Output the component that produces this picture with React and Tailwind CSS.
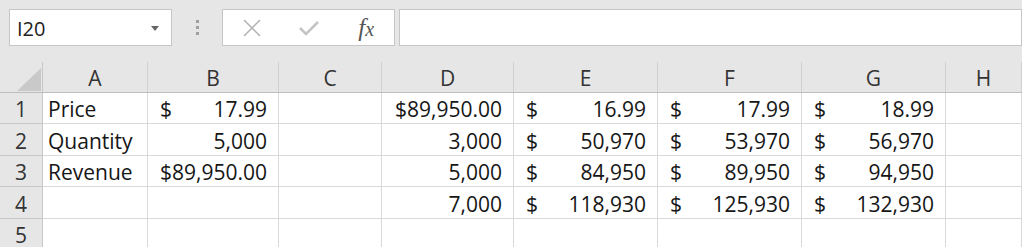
const cols = ['A', 'B', 'C', 'D', 'E', 'F', 'G', 'H'];

// each cell: text | { acct: value } | { right: value }
const rows = [
  { h: 'h-[31px]', cells: ['Price', { acct: '17.99' }, null, { right: '$89,950.00' }, { acct: '16.99' }, { acct: '17.99' }, { acct: '18.99' }, null] },
  { h: 'h-[32px]', cells: ['Quantity', { right: '5,000' }, null, { right: '3,000' }, { acct: '50,970' }, { acct: '53,970' }, { acct: '56,970' }, null] },
  { h: 'h-[31px]', cells: ['Revenue', { right: '$89,950.00' }, null, { right: '5,000' }, { acct: '84,950' }, { acct: '89,950' }, { acct: '94,950' }, null] },
  { h: 'h-[32px]', cells: [null, null, null, { right: '7,000' }, { acct: '118,930' }, { acct: '125,930' }, { acct: '132,930' }, null] },
  { h: 'h-[31px]', cells: [null, null, null, null, null, null, null, null] },
];

const gridCols = 'grid grid-cols-[43px_105px_131px_103px_132px_144px_144px_144px_1fr]';

function Cell({ value }) {
  if (value == null) return <div className="border-r border-b border-[#d9d9d9] bg-white" />;
  if (typeof value === 'string') {
    return (
      <div className="flex items-center pt-[3px] pl-[5px] border-r border-b border-[#d9d9d9] bg-white whitespace-nowrap">
        {value}
      </div>
    );
  }
  if (value.acct) {
    return (
      <div className="flex items-center justify-between pt-[3px] pl-[12px] pr-[11px] border-r border-b border-[#d9d9d9] bg-white whitespace-nowrap">
        <span>$</span>
        <span>{value.acct}</span>
      </div>
    );
  }
  return (
    <div className="flex items-center justify-end pt-[3px] pr-[11px] border-r border-b border-[#d9d9d9] bg-white whitespace-nowrap">
      {value.right}
    </div>
  );
}

export default function App() {
  return (
    <div className="w-[1022px] h-[247px] overflow-hidden bg-[#e6e6e6] font-['Open_Sans',sans-serif] text-[21px] leading-none text-[#161616]">
      {/* formula bar */}
      <div className="flex items-start h-[62px] pt-[9px]">
        <div className="ml-[9px] w-[163px] h-[37px] bg-white border border-[#c6c6c6] flex items-center justify-between pt-[2px] pl-[7px] pr-[12px]">
          <span className="text-[20px] text-[#222]">I20</span>
          <svg width="8" height="5" viewBox="0 0 8 5"><path d="M0 0 L8 0 L4 5 Z" fill="#666" /></svg>
        </div>
        <div className="w-[50px] h-[37px] flex flex-col items-center justify-center gap-[3px]">
          <span className="w-[3px] h-[3px] bg-[#a0a0a0]" />
          <span className="w-[3px] h-[3px] bg-[#a0a0a0]" />
          <span className="w-[3px] h-[3px] bg-[#a0a0a0]" />
        </div>
        <div className="w-[173px] h-[37px] bg-white border border-[#c6c6c6] flex items-center">
          <div className="w-[58px] flex justify-center">
            <svg width="18" height="18" viewBox="0 0 18 18"><path d="M1 1 L17 17 M17 1 L1 17" stroke="#b4b4b4" strokeWidth="1.6" fill="none" /></svg>
          </div>
          <div className="w-[58px] flex justify-center">
            <svg width="22" height="18" viewBox="0 0 22 18"><path d="M2 9 L8 15 L20 3" stroke="#c4c4c4" strokeWidth="2.6" fill="none" /></svg>
          </div>
          <div className="w-[56px] flex justify-center">
            <span className="font-['Liberation_Serif',serif] italic text-[25px] text-[#555] leading-none">
              f<span className="text-[20px]">x</span>
            </span>
          </div>
        </div>
        <div className="ml-[4px] flex-1 h-[37px] bg-white border border-[#c6c6c6]" />
      </div>

      {/* sheet */}
      <div>
        <div className={`${gridCols} h-[31px] border-b border-[#bdbdbd] text-[#333]`}>
          <div className="relative border-r border-[#c8c8c8]">
            <svg className="absolute left-[17px] top-[6px]" width="24" height="23" viewBox="0 0 24 23"><path d="M24 0 L24 23 L0 23 Z" fill="#c9c9c9" /></svg>
          </div>
          {cols.map((c) => (
            <div key={c} className="flex items-center justify-center pt-[3px] border-r border-[#d0d0d0]">
              {c}
            </div>
          ))}
        </div>
        {rows.map((r, i) => (
          <div key={i} className={`${gridCols} ${r.h}`}>
            <div className="flex items-center justify-center pt-[3px] border-r border-b border-[#c8c8c8] bg-[#e6e6e6] text-[#333]">
              {i + 1}
            </div>
            {r.cells.map((v, j) => (
              <Cell key={j} value={v} />
            ))}
          </div>
        ))}
      </div>
    </div>
  );
}
